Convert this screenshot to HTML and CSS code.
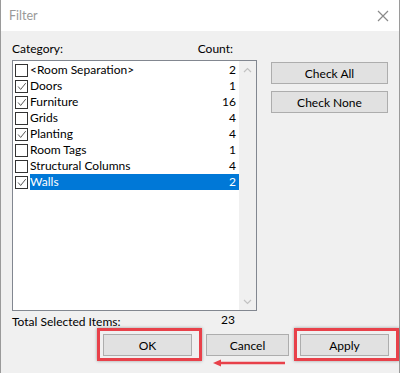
FILE: index.html
```html
<!DOCTYPE html>
<html lang="en">
	<head>
		<meta charset="UTF-8" />
		<title>Filter</title>
		<link rel="stylesheet" href="styles.css">
	</head>
	<body>
		<div class="dialog">
			<div class="titlebar">
				<span class="title">Filter</span>
				<svg class="close" width="12" height="12" viewBox="0 0 12 12">
					<path d="M1 1 L11 11 M11 1 L1 11" stroke="#8a8a8a" stroke-width="1.2" fill="none" />
				</svg>
			</div>

			<div class="content">
				<div class="main">
					<div class="left">
						<div class="list-head">
							<span>Category:</span>
							<span class="count-head">Count:</span>
						</div>

						<div class="listbox">
							<div class="rows">
								<div class="row">
									<span class="check"></span>
									<span class="cell"><span>&lt;Room Separation&gt;</span><span>2</span></span>
								</div>
								<div class="row">
									<span class="check checked"><svg viewBox="0 0 13 13"><path d="M2.5 6.5 L5.5 10 L11.5 2.5" /></svg></span>
									<span class="cell"><span>Doors</span><span>1</span></span>
								</div>
								<div class="row">
									<span class="check checked"><svg viewBox="0 0 13 13"><path d="M2.5 6.5 L5.5 10 L11.5 2.5" /></svg></span>
									<span class="cell"><span>Furniture</span><span>16</span></span>
								</div>
								<div class="row">
									<span class="check"></span>
									<span class="cell"><span>Grids</span><span>4</span></span>
								</div>
								<div class="row">
									<span class="check checked"><svg viewBox="0 0 13 13"><path d="M2.5 6.5 L5.5 10 L11.5 2.5" /></svg></span>
									<span class="cell"><span>Planting</span><span>4</span></span>
								</div>
								<div class="row">
									<span class="check"></span>
									<span class="cell"><span>Room Tags</span><span>1</span></span>
								</div>
								<div class="row">
									<span class="check"></span>
									<span class="cell"><span>Structural Columns</span><span>4</span></span>
								</div>
								<div class="row">
									<span class="check checked"><svg viewBox="0 0 13 13"><path d="M2.5 6.5 L5.5 10 L11.5 2.5" /></svg></span>
									<span class="cell selected"><span>Walls</span><span>2</span></span>
								</div>
							</div>
							<div class="scrollbar">
								<svg width="9" height="6" viewBox="0 0 9 6"><path d="M1 5 L4.5 1.5 L8 5" /></svg>
								<svg width="9" height="6" viewBox="0 0 9 6"><path d="M1 1 L4.5 4.5 L8 1" /></svg>
							</div>
						</div>

						<div class="total">
							<span>Total Selected Items:</span>
							<span class="total-num">23</span>
						</div>
					</div>

					<div class="side">
						<button class="btn side-btn">Check All</button>
						<button class="btn side-btn">Check None</button>
					</div>
				</div>

				<div class="footer">
					<span class="mark"><button class="btn foot-btn">OK</button></span>
					<button class="btn foot-btn cancel">Cancel</button>
					<span class="mark"><button class="btn foot-btn">Apply</button></span>
					<svg class="arrow" width="74" height="8" viewBox="0 0 74 8">
						<path d="M7 4 L72 4" stroke="#e8414a" stroke-width="2.5" />
						<path d="M0 4 L8 0.5 L8 7.5 Z" fill="#e8414a" />
					</svg>
				</div>
			</div>
		</div>
	</body>
</html>
```

FILE: styles.css
```css
* {
	margin: 0;
	padding: 0;
	box-sizing: border-box;
}

body {
	font-family: 'Lato', 'Noto Sans', sans-serif;
	font-size: 12px;
	color: #000;
	background: #f0f0f0;
	width: 400px;
	height: 373px;
	overflow: hidden;
}

.dialog {
	height: 373px;
	border-left: 1px solid #9a9a9a;
	border-right: 1px solid #9a9a9a;
	background: #f0f0f0;
}

.titlebar {
	height: 31px;
	background: #fff;
	display: flex;
	align-items: center;
	justify-content: space-between;
	padding: 0 10px 0 8px;
}

.title {
	color: #999;
	font-size: 12.5px;
}

.close {
	display: block;
}

.content {
	padding: 9px 0 0 11px;
	position: relative;
}

.main {
	display: flex;
	gap: 14px;
}

.list-head {
	display: flex;
	height: 18px;
	line-height: 18px;
	width: 245px;
	margin-bottom: 2px;
}

.count-head {
	margin-left: auto;
	margin-right: 24px;
}

.listbox {
	width: 245px;
	height: 251px;
	border: 1px solid #828790;
	background: #fff;
	display: flex;
}

.rows {
	flex: 1;
	padding-top: 1px;
}

.row {
	display: flex;
	align-items: center;
	height: 16px;
	padding-left: 2px;
}

.check {
	width: 13px;
	height: 13px;
	border: 1px solid #333;
	background: #fff;
	margin-right: 2px;
	flex: none;
	display: flex;
}

.check svg {
	width: 11px;
	height: 11px;
	fill: none;
	stroke: #4a4a4a;
	stroke-width: 1.1;
}

.cell {
	flex: 1;
	height: 16px;
	line-height: 16px;
	display: flex;
	justify-content: space-between;
	padding-right: 3px;
}

.selected {
	background: #0078d7;
	color: #fff;
}

.scrollbar {
	width: 17px;
	background: #f0f0f0;
	display: flex;
	flex-direction: column;
	justify-content: space-between;
	align-items: center;
	padding: 6px 0 5px;
}

.scrollbar svg {
	fill: none;
	stroke: #c2c2c2;
	stroke-width: 1.2;
}

.total {
	display: flex;
	width: 223px;
	justify-content: space-between;
	padding-top: 3px;
	line-height: 16px;
}

.total-num {
	margin-top: -2px;
}

.side {
	display: flex;
	flex-direction: column;
	gap: 7px;
	padding-top: 22px;
}

.btn {
	font-family: 'Lato', 'Noto Sans', sans-serif;
	font-size: 12px;
	color: #000;
	background: #e1e1e1;
	border: 1px solid #adadad;
	height: 22px;
}

.side-btn {
	width: 117px;
}

.footer {
	display: flex;
	align-items: flex-start;
	gap: 4px;
	margin-top: -2px;
	padding-left: 85px;
}

.foot-btn {
	width: 89px;
	display: block;
}

.cancel {
	width: 87px;
	margin-top: 6px;
	margin-right: 1px;
}

.mark {
	display: block;
	border: 3px solid #e8414a;
	padding: 3px 7px 2px 3px;
	box-shadow: 0 0 3px rgba(0, 0, 0, 0.35);
}

.arrow {
	position: absolute;
	left: 212px;
	top: 328px;
}
```
